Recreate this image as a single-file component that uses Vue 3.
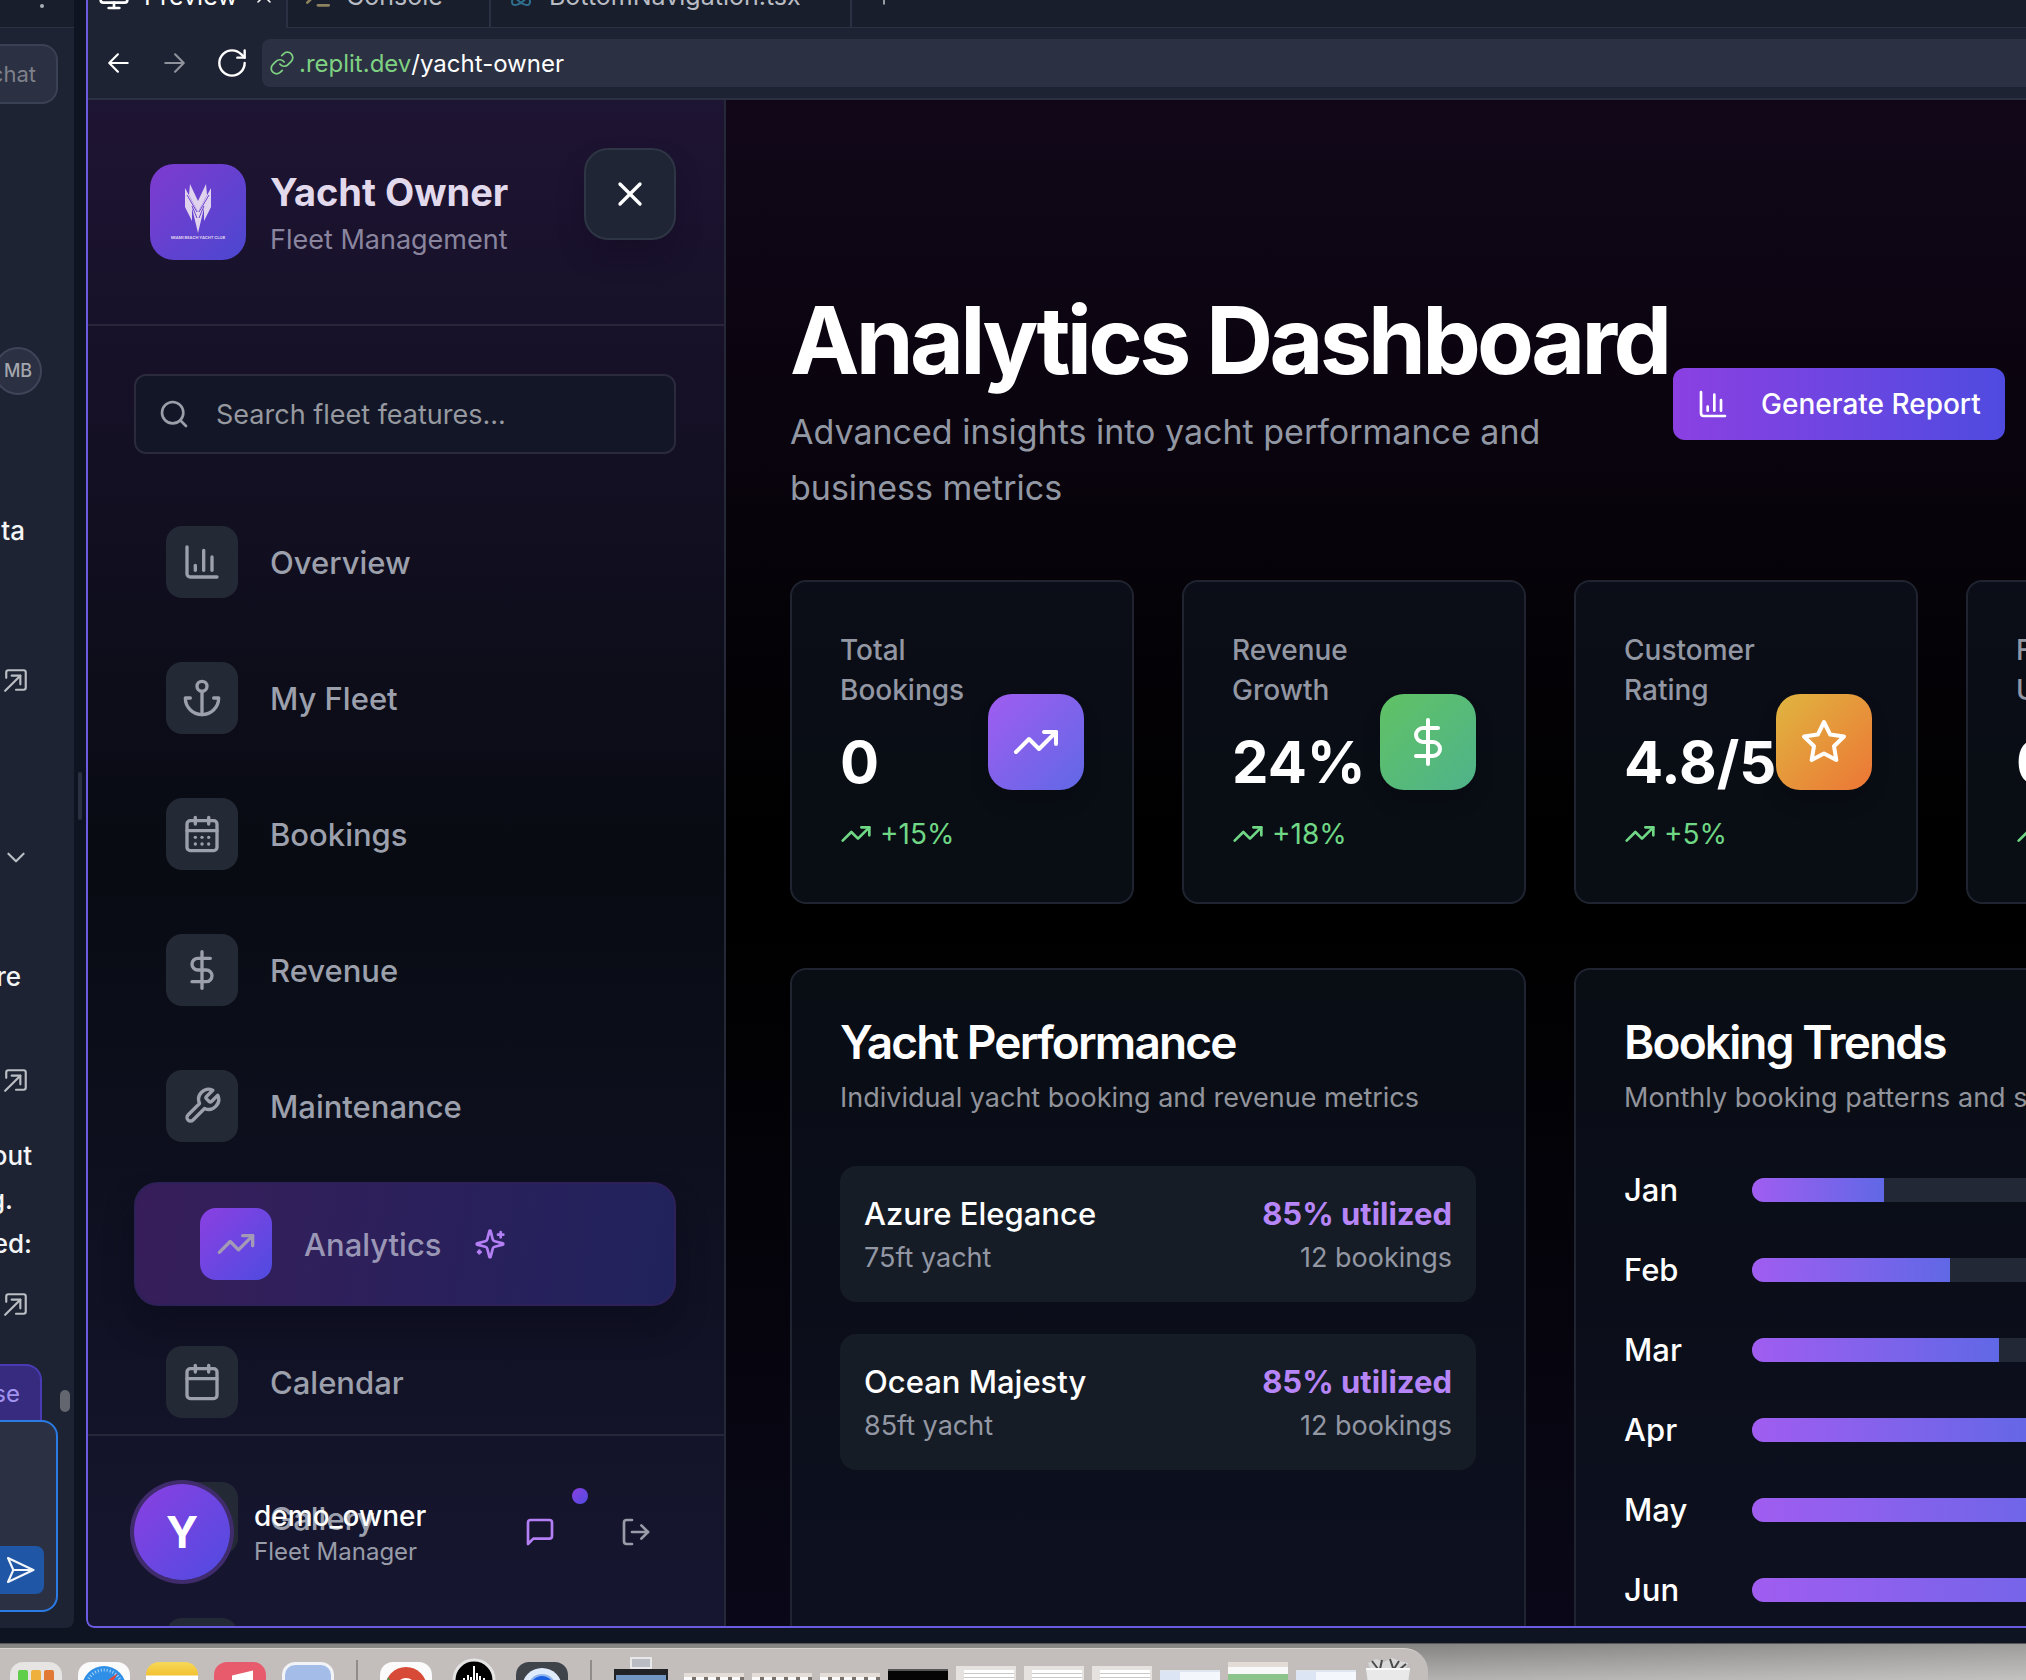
<script setup>
import { h } from 'vue'

const glyphs = {
  chart: ['M3 3v16a2 2 0 0 0 2 2h16', 'M18 17V9', 'M13 17V5', 'M8 17v-3'],
  anchor: ['M12 22V8', 'M5 12H2a10 10 0 0 0 20 0h-3', 'M15 5a3 3 0 1 1-6 0a3 3 0 1 1 6 0'],
  calendarDays: [
    'M8 2v4', 'M16 2v4', 'M5 4h14a2 2 0 0 1 2 2v14a2 2 0 0 1-2 2H5a2 2 0 0 1-2-2V6a2 2 0 0 1 2-2z', 'M3 10h18',
    'M8 14h.01', 'M12 14h.01', 'M16 14h.01', 'M8 18h.01', 'M12 18h.01', 'M16 18h.01'
  ],
  calendar: ['M8 2v4', 'M16 2v4', 'M5 4h14a2 2 0 0 1 2 2v14a2 2 0 0 1-2 2H5a2 2 0 0 1-2-2V6a2 2 0 0 1 2-2z', 'M3 10h18'],
  dollar: ['M12 1v22', 'M17 5H9.5a3.5 3.5 0 0 0 0 7h5a3.5 3.5 0 0 1 0 7H6'],
  wrench: ['M14.7 6.3a1 1 0 0 0 0 1.4l1.6 1.6a1 1 0 0 0 1.4 0l3.77-3.77a6 6 0 0 1-7.94 7.94l-6.91 6.91a2.12 2.12 0 0 1-3-3l6.91-6.91a6 6 0 0 1 7.94-7.94l-3.76 3.76z'],
  trend: ['M22 7l-8.5 8.5l-5-5L2 17', 'M16 7h6v6'],
  sparkles: [
    'M9.937 15.5A2 2 0 0 0 8.5 14.063l-6.135-1.582a.5.5 0 0 1 0-.962L8.5 9.936A2 2 0 0 0 9.937 8.5l1.582-6.135a.5.5 0 0 1 .963 0L14.063 8.5A2 2 0 0 0 15.5 9.937l6.135 1.581a.5.5 0 0 1 0 .964L15.5 14.063a2 2 0 0 0-1.437 1.437l-1.582 6.135a.5.5 0 0 1-.963 0z',
    'M20 3v4', 'M22 5h-4', 'M4 17v2', 'M5 18H3'
  ],
  blank: [],
  star: ['M12 2l3.09 6.26L22 9.27l-5 4.87l1.18 6.88L12 17.77l-6.18 3.25L7 14.14L2 9.27l6.91-1.01z'],
  search: ['M19 11a8 8 0 1 1-16 0a8 8 0 1 1 16 0', 'M21 21l-4.3-4.3'],
  close: ['M18 6L6 18', 'M6 6l12 12'],
  message: ['M21 15a2 2 0 0 1-2 2H7l-4 4V5a2 2 0 0 1 2-2h14a2 2 0 0 1 2 2z'],
  logout: ['M9 21H5a2 2 0 0 1-2-2V5a2 2 0 0 1 2-2h4', 'M16 17l5-5l-5-5', 'M21 12H9'],
  back: ['M20 12H4', 'M11 4l-8 8l8 8'],
  forward: ['M4 12h16', 'M13 4l8 8l-8 8'],
  reload: ['M21.5 12a9.5 9.5 0 1 1-9.5-9.5c2.7 0 5 1 7 3L21.5 8', 'M21.5 2.5V8H16'],
  link: ['M10 13a5 5 0 0 0 7.54.54l3-3a5 5 0 0 0-7.07-7.07l-1.72 1.71', 'M14 11a5 5 0 0 0-7.54-.54l-3 3a5 5 0 0 0 7.07 7.07l1.71-1.71'],
  monitor: ['M4 3h16a2 2 0 0 1 2 2v10a2 2 0 0 1-2 2H4a2 2 0 0 1-2-2V5a2 2 0 0 1 2-2z', 'M8 21h8', 'M12 17v4'],
  prompt: ['M4 17l6-6l-6-6', 'M12 19h8'],
  atom: [
    'M20.2 20.2c2.04-2.03.02-7.36-4.5-11.9C11.17 3.78 5.84 1.76 3.8 3.8c-2.04 2.03-.02 7.36 4.5 11.9c4.54 4.52 9.87 6.54 11.9 4.5z',
    'M15.7 15.7c4.52-4.54 6.54-9.87 4.5-11.9c-2.03-2.04-7.36-.02-11.9 4.5C3.78 12.83 1.76 18.16 3.8 20.2c2.03 2.04 7.36.02 11.9-4.5z',
    'M12 12h.01'
  ],
  plus: ['M12 4v16', 'M4 12h16'],
  open: ['M3 10V5a2 2 0 0 1 2-2h14a2 2 0 0 1 2 2v14a2 2 0 0 1-2 2h-7', 'M2 22L16 8', 'M8 8h8v8'],
  chevron: ['M5 9l7 7l7-7'],
  send: ['M3 3l19 9l-19 9l4-9z', 'M7 12h15']
}

const Icon = (props) =>
  h('svg', {
    width: props.size, height: props.size, viewBox: '0 0 24 24', fill: 'none', stroke: 'currentColor',
    'stroke-width': props.stroke || 2, 'stroke-linecap': 'round', 'stroke-linejoin': 'round',
    'aria-hidden': 'true', style: { flex: 'none', display: 'block' }
  }, glyphs[props.name].map((d) => h('path', { d })))
Icon.props = ['name', 'size', 'stroke']

const nav = [
  { label: 'Overview', icon: 'chart' },
  { label: 'My Fleet', icon: 'anchor' },
  { label: 'Bookings', icon: 'calendarDays' },
  { label: 'Revenue', icon: 'dollar' },
  { label: 'Maintenance', icon: 'wrench' },
  { label: 'Analytics', icon: 'trend', active: true },
  { label: 'Calendar', icon: 'calendar' },
  { label: 'Gallery', icon: 'blank' },
  { label: 'Settings', icon: 'blank' }
]

const stats = [
  { label: 'Total Bookings', value: '0', change: '+15%', icon: 'trend', tone: 'violet' },
  { label: 'Revenue Growth', value: '24%', change: '+18%', icon: 'dollar', tone: 'green' },
  { label: 'Customer Rating', value: '4.8/5', change: '+5%', icon: 'star', tone: 'amber' },
  { label: 'Fleet Utilization', value: '0%', change: '+8%', icon: 'anchor', tone: 'violet' }
]

const yachts = [
  { name: 'Azure Elegance', size: '75ft yacht', used: '85% utilized', bookings: '12 bookings' },
  { name: 'Ocean Majesty', size: '85ft yacht', used: '85% utilized', bookings: '12 bookings' }
]

const months = [
  { name: 'Jan', share: 32 },
  { name: 'Feb', share: 48 },
  { name: 'Mar', share: 60 },
  { name: 'Apr', share: 72 },
  { name: 'May', share: 88 },
  { name: 'Jun', share: 100 }
]
</script>

<template>
  <div class="desktop">
    <div class="workspace">
      <aside class="chat">
        <div class="chat-head"><i></i></div>
        <button class="new-chat">chat</button>
        <div class="member">MB</div>
        <p class="line first">ta</p>
        <button class="open one" aria-label="Open file"><Icon name="open" size="26" /></button>
        <button class="open fold" aria-label="Expand"><Icon name="chevron" size="26" /></button>
        <p class="line second">re</p>
        <button class="open two" aria-label="Open file"><Icon name="open" size="26" /></button>
        <div class="para">
          <p class="line wide">out</p>
          <p class="line short">g.</p>
          <p class="line wide">ed:</p>
        </div>
        <button class="open three" aria-label="Open file"><Icon name="open" size="26" /></button>
        <div class="composer-wrap">
          <div class="pause-row">
            <button class="pause">se</button>
            <i class="thumb"></i>
          </div>
          <div class="composer">
            <button class="send" aria-label="Send"><Icon name="send" size="32" stroke="1.6" /></button>
          </div>
        </div>
      </aside>

      <div class="gutter"><i></i></div>

      <section class="preview">
        <div class="tabs">
          <button class="tab current"><Icon name="monitor" size="32" /><span>Preview</span><Icon name="close" size="24" stroke="1.5" /></button>
          <button class="tab console"><Icon name="prompt" size="32" /><span>Console</span></button>
          <button class="tab file"><Icon name="atom" size="24" /><span>BottomNavigation.tsx</span></button>
          <button class="tab add" aria-label="New tab"><Icon name="plus" size="24" stroke="1.6" /></button>
        </div>
        <div class="toolbar">
          <button aria-label="Back"><Icon name="back" size="26" /></button>
          <button class="dim" aria-label="Forward"><Icon name="forward" size="26" /></button>
          <button class="reload" aria-label="Reload"><Icon name="reload" size="32" stroke="1.8" /></button>
          <label class="address">
            <Icon name="link" size="26" stroke="1.6" />
            <span>.replit.dev</span>
            <input value="/yacht-owner" aria-label="Address" />
          </label>
        </div>

        <div class="app">
          <aside class="sidebar">
            <header class="brand">
              <div class="brand-id">
                <div class="logo">
                  <svg width="96" height="96" viewBox="0 0 96 96" aria-hidden="true">
                    <g fill="#dfd3ee">
                      <path d="M40 20L48 37L56 20L57 31L48 48L39 31Z" />
                      <path d="M35 24L48 48L61 24V43L54 57V44L48 69L42 44V57L35 43Z" />
                    </g>
                    <path d="M37 31L47 48M59 31L49 48M42 42L47 54M54 42L49 54" stroke="#6c3fcf" stroke-width="1" />
                    <text x="48" y="75" text-anchor="middle" font-size="4" font-weight="700" fill="#dfd3ee">MIAMI BEACH YACHT CLUB</text>
                  </svg>
                </div>
                <div>
                  <h2>Yacht Owner</h2>
                  <p>Fleet Management</p>
                </div>
              </div>
              <button class="close" aria-label="Close menu"><Icon name="close" size="40" /></button>
            </header>

            <div class="menu">
              <label class="search">
                <Icon name="search" size="32" />
                <input type="text" placeholder="Search fleet features..." aria-label="Search fleet features" />
              </label>
              <nav>
                <button v-for="item in nav" :key="item.label" class="nav-item" :class="{ active: item.active }">
                  <span class="nav-icon"><Icon :name="item.icon" size="40" /></span>
                  <span>{{ item.label }}</span>
                  <Icon v-if="item.active" class="spark" name="sparkles" size="32" />
                </button>
              </nav>
            </div>

            <footer class="user">
              <div class="avatar">Y</div>
              <div class="who">
                <strong>demo_owner</strong>
                <span>Fleet Manager</span>
              </div>
              <button class="messages" aria-label="Messages"><Icon name="message" size="32" /><i></i></button>
              <button aria-label="Log out"><Icon name="logout" size="32" /></button>
            </footer>
          </aside>

          <main>
            <header class="page-head">
              <div class="page-title">
                <h1>Analytics Dashboard</h1>
                <p>Advanced insights into yacht performance and business metrics</p>
              </div>
              <button class="report"><Icon name="chart" size="32" /><span>Generate Report</span></button>
            </header>

            <div class="board">
              <article v-for="s in stats" :key="s.label" class="card stat">
                <div class="stat-text">
                  <p class="label">{{ s.label }}</p>
                  <p class="value">{{ s.value }}</p>
                  <p class="change"><Icon name="trend" size="32" /><span>{{ s.change }}</span></p>
                </div>
                <div class="badge" :class="s.tone"><Icon :name="s.icon" size="48" /></div>
              </article>

              <section class="card panel">
                <h3>Yacht Performance</h3>
                <p class="sub">Individual yacht booking and revenue metrics</p>
                <ul class="yachts">
                  <li v-for="y in yachts" :key="y.name">
                    <div><b>{{ y.name }}</b><span>{{ y.size }}</span></div>
                    <div class="end"><b>{{ y.used }}</b><span>{{ y.bookings }}</span></div>
                  </li>
                </ul>
              </section>

              <section class="card panel">
                <h3>Booking Trends</h3>
                <p class="sub">Monthly booking patterns and seasonal trends</p>
                <ul class="months">
                  <li v-for="m in months" :key="m.name">
                    <span>{{ m.name }}</span>
                    <div class="track"><div class="fill" :style="{ width: m.share + '%' }"></div></div>
                  </li>
                </ul>
              </section>
            </div>
          </main>
        </div>
      </section>
    </div>

    <div class="shelf">
      <div class="dock">
        <div class="ico launch"><i></i><i></i><i></i></div>
        <div class="ico safari">
          <svg width="52" height="52" viewBox="0 0 52 52"><circle cx="26" cy="26" r="22" fill="#2f8fe6" /><circle cx="26" cy="26" r="18" fill="none" stroke="#a9d5f7" stroke-width="3" stroke-dasharray="1 2" /><path d="M40 11L29 29L23 23Z" fill="#e2473c" /></svg>
        </div>
        <div class="ico notes"></div>
        <div class="ico music">
          <svg width="52" height="52" viewBox="0 0 52 52"><path d="M20 40V15L37 11V36" fill="none" stroke="#fff" stroke-width="4" /><path d="M20 15L37 11V18L20 22Z" fill="#fff" /></svg>
        </div>
        <div class="ico blank"></div>
        <i class="rule"></i>
        <div class="ico chrome">
          <svg width="52" height="52" viewBox="0 0 52 52"><circle cx="26" cy="26" r="21" fill="#d84a38" /><path d="M5 26A21 21 0 0 0 26 47L18 30L8 15Z" fill="#3c9e54" /><path d="M47 26A21 21 0 0 1 26 47L35 26L32 18H45Z" fill="#f3c13a" /><circle cx="26" cy="26" r="10" fill="#fff" /><circle cx="26" cy="26" r="8" fill="#3f7de0" /></svg>
        </div>
        <div class="ico wave">
          <svg width="44" height="44" viewBox="0 0 44 44"><circle cx="22" cy="22" r="20" fill="#000" stroke="#e4e4e4" stroke-width="3" /><path d="M12 20v4M16 17v10M19 19v6M22 8v28M25 15v14M28 18v8M32 20v4" stroke="#fff" stroke-width="2" /></svg>
        </div>
        <div class="ico lens">
          <svg width="52" height="52" viewBox="0 0 52 52"><circle cx="26" cy="26" r="20" fill="#dfeafa" /><circle cx="26" cy="26" r="14" fill="#8db4ee" /><circle cx="26" cy="26" r="12" fill="#1b5ee0" /></svg>
        </div>
        <i class="rule"></i>
        <div class="drive"><i></i><b></b></div>
        <div class="win low"></div>
        <div class="win low"></div>
        <div class="win low"></div>
        <div class="win black"></div>
        <div class="win doc"></div>
        <div class="win doc"></div>
        <div class="win doc"></div>
        <div class="win pale"></div>
        <div class="win green"></div>
        <div class="win pale"></div>
        <div class="trash">
          <svg width="48" height="48" viewBox="0 0 48 48"><path d="M4 6L12 2L20 5L28 1L36 4L44 6L40 16H8Z" fill="#d8d8d8" /><path d="M8 4l6 8M18 3l-2 9M26 2l3 9M35 4l-5 8M42 7l-6 5" stroke="#4a4a4a" stroke-width="2" /><path d="M2 12H46L41 48H7Z" fill="#e9e9e9" /><path d="M2 12H46" stroke="#fafafa" stroke-width="2" /></svg>
        </div>
      </div>
    </div>
  </div>
</template>

<style>
html, body { background: #0e1420; }
</style>

<style scoped>
* { box-sizing: border-box; margin: 0; padding: 0; }
button { border: 0; background: none; color: inherit; font: inherit; display: flex; align-items: center; }
input { border: 0; outline: 0; background: none; font: inherit; min-width: 0; }
ul { list-style: none; }
i { display: block; }

.desktop { height: 100vh; display: flex; flex-direction: column; overflow: hidden; background: #0e1421; color: #fff; font-family: Inter, sans-serif; }
.workspace { flex: 1; min-height: 0; display: flex; }

/* Chat column */
.chat { flex: none; width: 74px; display: flex; flex-direction: column; overflow: hidden; background: #1d2332; border-bottom-right-radius: 8px; color: #f4f5f7; }
.chat-head { flex: none; height: 28px; background: #181e2b; border-bottom: 1px solid #2b3142; }
.chat-head i { width: 4px; height: 4px; margin: 4px 0 0 40px; border-radius: 50%; background: #a9adb5; }
.new-chat { flex: none; width: 78px; height: 60px; margin: 16px 0 0 -20px; padding-right: 20px; justify-content: flex-end; border: 2px solid #3b4154; border-radius: 16px; background: #2b3042; color: #7e818b; font-size: 22px; }
.member { flex: none; width: 48px; height: 48px; margin: 243px 0 0 -6px; border: 2px solid #3f4558; border-radius: 50%; background: #2b3042; color: #a3a6ad; font-size: 18px; font-weight: 500; line-height: 44px; text-align: center; }
.line { flex: none; width: 74px; margin-left: -42px; font-size: 26px; font-weight: 500; line-height: 44px; text-align: right; white-space: nowrap; }
.line.first { margin-top: 114px; padding-right: 7px; }
.line.second { margin-top: 85px; padding-right: 11px; }
.line.short { padding-right: 19px; }
.open { flex: none; margin-left: 3px; color: #babdc2; }
.open.one { margin-top: 114px; }
.open.fold { margin-top: 151px; }
.open.two { margin-top: 68px; }
.open.three { margin-top: 25px; }
.para { margin-top: 41px; }
.composer-wrap { margin-top: auto; padding-bottom: 16px; }
.pause-row { display: flex; justify-content: space-between; padding-right: 4px; }
.pause { width: 62px; height: 56px; margin-left: -20px; padding-right: 20px; justify-content: flex-end; border: 2px solid #4a3bb4; border-bottom: 0; border-top-right-radius: 16px; background: #372b80; color: #a193ee; font-size: 24px; }
.thumb { width: 10px; height: 22px; margin-top: 26px; border-radius: 5px; background: #63666f; }
.composer { width: 78px; height: 192px; margin-left: -20px; padding: 0 12px 16px 0; display: flex; justify-content: flex-end; align-items: flex-end; border: 2px solid #2a7be4; border-radius: 16px; background: #2b3042; }
.send { width: 56px; height: 48px; justify-content: flex-end; padding-right: 8px; border-radius: 8px; background: #1f56a5; color: #f2f6fb; }
.gutter { flex: none; width: 12px; padding: 772px 0 0 4px; }
.gutter i { width: 4px; height: 48px; border-radius: 2px; background: #2a3040; }

/* Preview window */
.preview { position: relative; flex: 1; min-width: 0; display: flex; flex-direction: column; overflow: hidden; background: #1d2332; border-bottom-left-radius: 8px; }
.preview::after { content: ''; position: absolute; inset: -8px -8px 0 0; border: 2px solid #6a5be0; border-bottom-left-radius: 8px; pointer-events: none; }
.tabs { flex: none; display: flex; height: 64px; margin-top: -36px; }
.tab { gap: 16px; padding: 0 12px; background: #181e2b; border-right: 2px solid #2b3142; border-bottom: 1px solid #2b3142; color: #b9bcc3; font-size: 25px; line-height: 32px; }
.tab.current { flex: none; width: 202px; gap: 14px; background: #1d2332; border-bottom: 0; color: #fff; }
.tab.console { flex: none; width: 203px; gap: 12px; padding-left: 14px; }
.tab.console svg { color: #8d8360; }
.tab.file { flex: none; width: 361px; padding-left: 18px; }
.tab.file svg { color: #2f6f8d; }
.tab.add { flex: 1; padding-left: 20px; border-right: 0; }
.toolbar { flex: none; height: 72px; display: flex; align-items: center; padding-left: 20px; border-bottom: 2px solid #2b3142; }
.toolbar button { width: 55px; }
.toolbar .reload { width: 46px; }
.toolbar .dim { color: #8f929b; }
.address { flex: 1; height: 48px; display: flex; align-items: center; padding-left: 7px; border-radius: 8px 0 0 8px; background: #2b3042; color: #7fd182; font-size: 24px; }
.address span { margin-left: 4px; }
.address input { flex: 1; color: #fff; }
.app { flex: 1; min-height: 0; display: flex; overflow: hidden; background: #000; }

/* Sidebar */
.sidebar { position: relative; flex: none; width: 640px; overflow: hidden; border-right: 2px solid #252836; background: linear-gradient(#1e1433, #080b12 50%, #171631); }
.brand { height: 226px; display: flex; justify-content: space-between; align-items: flex-start; padding: 48px; border-bottom: 2px solid #2a2539; }
.brand-id { display: flex; gap: 24px; padding: 16px; }
.logo { width: 96px; height: 96px; border-radius: 24px; background: linear-gradient(135deg, #7f3bd0, #4b47d0); }
.brand h2 { font-size: 38px; line-height: 56px; font-weight: 700; color: #e2d9ec; white-space: nowrap; }
.brand p { font-size: 27px; line-height: 40px; color: #8a859e; white-space: nowrap; }
.close { flex: none; width: 92px; height: 92px; justify-content: center; border: 2px solid #2e3544; border-radius: 24px; background: #1f2535; box-shadow: 0 16px 24px rgba(20, 10, 36, .4); }
.menu { padding: 48px; }
.search { display: flex; align-items: center; gap: 24px; height: 80px; padding-left: 22px; border: 2px solid #2a2a3c; border-radius: 12px; background: #131627; color: #9a9ea9; font-size: 27px; }
.search input { flex: 1; margin-left: 2px; color: #fff; }
.search input::placeholder { color: #96999f; opacity: 1; }
nav { display: flex; flex-direction: column; gap: 16px; margin-top: 48px; }
.nav-item { height: 120px; gap: 32px; padding: 0 32px; border-radius: 24px; color: #9ca0ac; font-size: 31px; font-weight: 500; }
.nav-icon { width: 72px; height: 72px; display: flex; align-items: center; justify-content: center; border-radius: 16px; background: #242936; }
.nav-item.active { height: 124px; padding: 0 64px; border: 2px solid #2e2058; background: linear-gradient(100deg, #371e5a, #20225c); color: #9a96b5; box-shadow: 0 20px 30px rgba(6, 8, 20, .35); }
.active .nav-icon { background: linear-gradient(135deg, #8b40e2, #4f4be0); color: #a39bb5; }
.spark { color: #b47ff5; }
.user { position: absolute; left: 0; right: 0; bottom: 0; display: flex; align-items: center; padding: 48px; border-top: 2px solid #262839; }
.avatar { width: 96px; height: 96px; border-radius: 50%; background: linear-gradient(135deg, #8b40e2, #4f4be0); box-shadow: 0 0 0 4px #402c6d; font-size: 44px; font-weight: 700; line-height: 96px; text-align: center; }
.who { flex: 1; margin-left: 24px; display: flex; flex-direction: column; }
.who strong { font-size: 28px; line-height: 40px; font-weight: 500; }
.who span { font-size: 24px; line-height: 32px; color: #989ca8; }
.user button { position: relative; width: 80px; height: 80px; justify-content: center; color: #989ca8; }
.user .messages { margin-right: 16px; color: #b47ff5; }
.messages i { position: absolute; top: -4px; right: -8px; width: 16px; height: 16px; border-radius: 50%; background: linear-gradient(135deg, #8b40e2, #4f4be0); }

/* Dashboard */
main { flex: 1; min-width: 0; padding: 192px 0 0 64px; overflow: hidden; background: linear-gradient(#110719, #000 48%, #000 54%, #0a0818); }
.page-head { display: flex; align-items: center; }
.page-title { flex: none; width: 883px; }
.page-title h1 { font-size: 93px; line-height: 96px; font-weight: 700; letter-spacing: -0.04em; white-space: nowrap; }
.page-title p { max-width: 800px; margin-top: 16px; font-size: 34px; line-height: 56px; color: #9297a4; }
.report { flex: none; height: 72px; gap: 32px; padding: 0 24px; border-radius: 12px; background: linear-gradient(90deg, #8b40e2, #4f4be0); font-size: 28px; font-weight: 500; white-space: nowrap; }
.board { display: grid; grid-template-columns: repeat(4, 344px); column-gap: 48px; row-gap: 64px; margin-top: 64px; }
.card { border: 2px solid #1f2430; border-radius: 16px; padding: 48px; background: rgba(17, 24, 39, .52); }
.stat { display: flex; align-items: center; justify-content: space-between; }
.label, .change { font-size: 28px; line-height: 40px; }
.label { font-weight: 500; color: #9297a3; }
.value { margin: 16px 0; font-size: 58px; line-height: 72px; font-weight: 700; }
.change { display: flex; align-items: center; gap: 8px; color: #6fd785; }
.badge { flex: none; width: 96px; height: 96px; display: flex; align-items: center; justify-content: center; border-radius: 24px; box-shadow: 0 12px 20px rgba(0, 0, 0, .1); }
.violet { background: linear-gradient(135deg, #a05df0, #6068e6); }
.green { background: linear-gradient(135deg, #60c264, #4fb38b); }
.amber { background: linear-gradient(135deg, #e0b53f, #ec7636); }
.panel { grid-column: span 2; height: 800px; white-space: nowrap; }
.panel h3 { font-size: 46px; line-height: 48px; font-weight: 600; letter-spacing: -0.04em; }
.panel .sub { margin: 12px 0 48px; font-size: 27px; line-height: 40px; color: #92949c; }
.yachts, .months { display: flex; flex-direction: column; gap: 32px; }
.yachts li { display: flex; justify-content: space-between; padding: 24px; border-radius: 16px; background: #161c26; }
.yachts b { display: block; font-size: 31px; line-height: 48px; font-weight: 500; }
.yachts span { display: block; font-size: 27px; line-height: 40px; color: #9297a3; }
.end { text-align: right; }
.yachts .end b { font-weight: 700; color: #b685f7; }
.months li { display: flex; align-items: center; font-size: 31px; line-height: 48px; font-weight: 500; }
.months span { width: 128px; }
.track { width: 412px; height: 24px; border-radius: 12px; overflow: hidden; background: #222835; }
.fill { height: 100%; background: linear-gradient(90deg, #a05df0, #6068e6); }

/* Desktop strip with the dock */
.shelf { flex: none; height: 37px; margin-top: 15px; padding-top: 4px; border-top: 1px solid #55565a; background: linear-gradient(90deg, transparent 1440px, rgba(255, 255, 255, .2)), linear-gradient(#858482, #b4b3b2); overflow: hidden; }
.dock { width: 1428px; height: 80px; display: flex; align-items: flex-start; gap: 16px; padding: 13px 0 0 10px; border-top: 1px solid #d6d2cf; border-top-right-radius: 24px; background: #c3bebb; }
.ico { flex: none; width: 52px; height: 52px; border-radius: 13px; overflow: hidden; }
.launch { display: flex; justify-content: center; gap: 3px; padding-top: 8px; background: #e6e5e4; }
.launch i { width: 10px; height: 12px; border-radius: 2px; background: #5fce4a; }
.launch i + i { background: #f0b13c; }
.launch i + i + i { background: #e07a35; }
.safari, .chrome { background: #fbfbfb; }
.notes { background: linear-gradient(#f8d858 0, #f3c233 13px, #fff 14px); }
.music { background: #e85b6d; }
.blank { border: 3px solid #f1f3f7; background: #a3bde8; }
.wave { width: 44px; margin: -4px 4px 0 4px; }
.lens { background: #3f444b; }
.rule { flex: none; width: 2px; height: 40px; margin: -2px 6px 0 6px; background: #8f8c8a; }
.drive { flex: none; width: 54px; height: 50px; margin-top: -5px; }
.drive i { width: 22px; height: 12px; margin: 0 auto; border: 2px solid #e8e8e8; background: #b9bcc2; }
.drive b { display: block; height: 38px; border-top: 6px solid #202225; background: #7296c4; border-left: 2px solid #202225; border-right: 2px solid #202225; }
.win { flex: none; width: 60px; height: 40px; margin-right: -8px; background: #fafafa; }
.low { margin-top: 11px; border-top: 4px solid #e4dcd7; background: repeating-linear-gradient(90deg, #fafafa 0 8px, #77716c 8px 12px); }
.black { margin-top: 7px; border-top: 2px solid #555; background: #050505; }
.doc { margin-top: 4px; border: 0 solid #e6e2df; border-width: 4px 2px 0 8px; background: repeating-linear-gradient(#fff 0 3px, #c9c9c9 3px 4px); }
.pale { margin-top: 8px; border-top: 2px solid #dfe6f0; background: linear-gradient(90deg, #dbe5f3 20px, #f4f7fb 20px); }
.green { margin-top: 0; }
.win.green { border-top: 5px solid #e3dcd6; background: linear-gradient(#f8f8f8 7px, #8cc48c 7px); }
.trash { flex: none; width: 48px; height: 48px; margin-top: -5px; }
</style>
